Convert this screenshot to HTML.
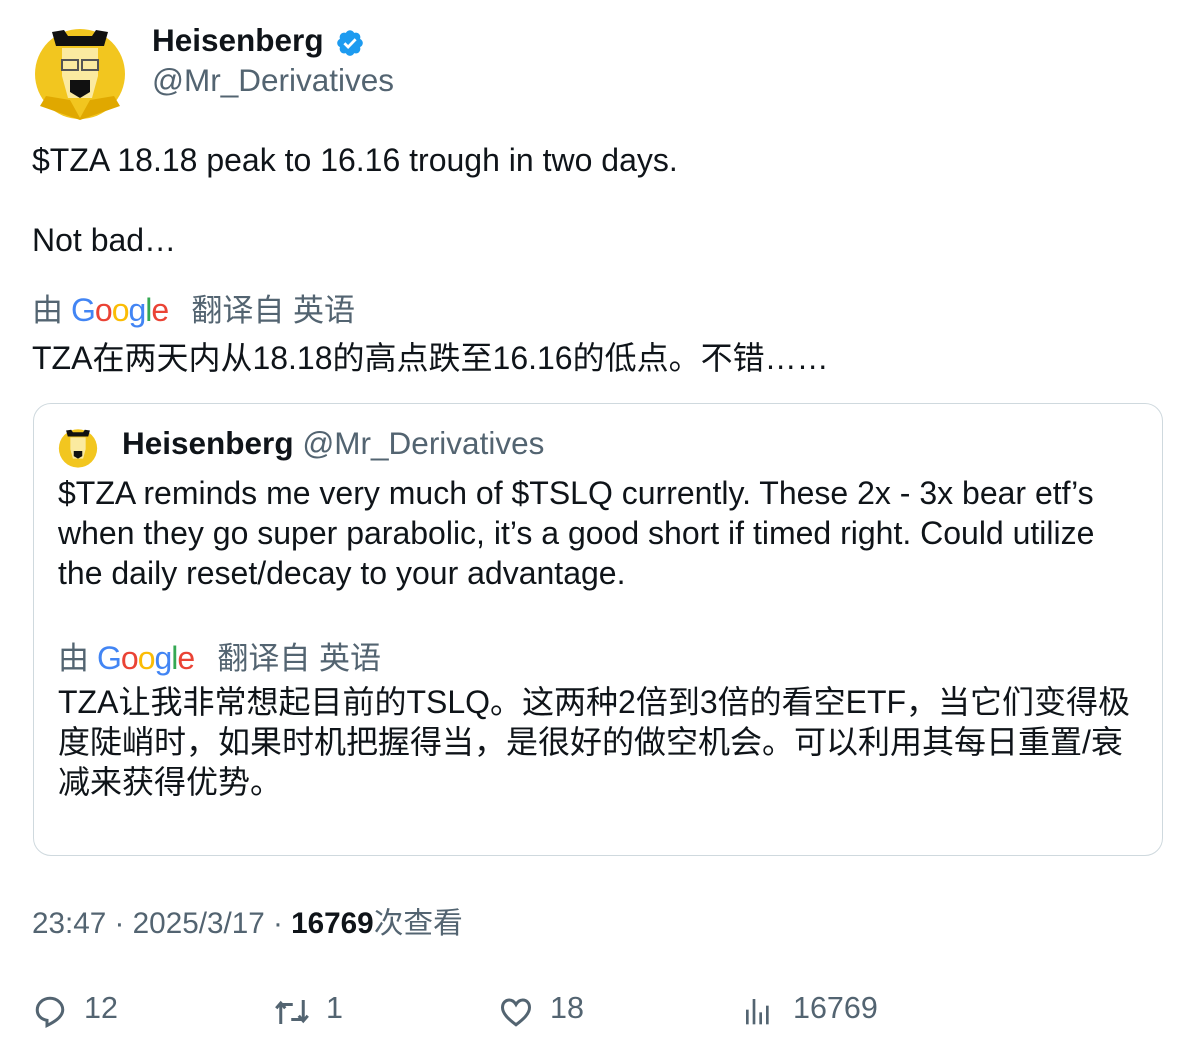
<!DOCTYPE html><html><head><meta charset="utf-8"><style>
body{margin:0;background:#fff;font-family:"Liberation Sans","Noto Sans CJK SC",sans-serif;color:#0f1419;width:1196px;height:1056px;overflow:hidden;position:relative}
.a{position:absolute;white-space:nowrap}
.g{font-weight:400;font-size:32px;letter-spacing:-1px;margin-left:8px;margin-right:6px}
.gr{color:#536471}
</style></head><body>
<svg class="a" style="left:34px;top:26px" width="92" height="94" viewBox="0 0 92 94">
<circle cx="46" cy="48" r="45" fill="#f2c61f"/>
<path d="M18 6 L30 4 L34 10 L58 10 L62 4 L74 6 L70 20 L22 20Z" fill="#111"/>
<path d="M28 22 L64 22 L64 50 L58 72 L34 72 L28 50Z" fill="#fbeaa0"/>
<rect x="28" y="34" width="16" height="10" fill="none" stroke="#555" stroke-width="2"/><rect x="48" y="34" width="16" height="10" fill="none" stroke="#555" stroke-width="2"/>
<path d="M36 54 L56 54 L56 66 L46 72 L36 66Z" fill="#111"/>
<path d="M12 70 L36 74 L46 92 L56 74 L80 70 L86 80 L46 94 L6 80Z" fill="#e0a800"/>
</svg>
<div class="a" style="left:152px;top:22px;font-size:31.5px;font-weight:bold">Heisenberg</div>
<svg class="a" style="left:335px;top:28px" width="30" height="30" viewBox="0 0 24 24"><path fill="#1d9bf0" d="M22.25 12c0-1.43-.88-2.67-2.19-3.34.46-1.39.2-2.9-.81-3.91s-2.52-1.27-3.91-.81c-.66-1.31-1.91-2.19-3.34-2.19s-2.670.88-3.33 2.19c-1.4-.46-2.91-.2-3.92.81s-1.26 2.52-.8 3.91c-1.31.67-2.2 1.91-2.2 3.34s.89 2.67 2.2 3.34c-.46 1.39-.21 2.9.8 3.91s2.52 1.26 3.91.81c.67 1.31 1.91 2.19 3.34 2.19s2.68-.88 3.34-2.19c1.39.45 2.9.2 3.91-.81s1.27-2.52.81-3.91c1.31-.67 2.19-1.91 2.19-3.34z"/><path d="M7.5 12.2l3 3 6-6.2" stroke="#fff" stroke-width="2.2" fill="none"/></svg>
<div class="a gr" style="left:152px;top:62px;font-size:31.5px">@Mr_Derivatives</div>
<div class="a" style="left:32px;top:142px;font-size:32px">$TZA 18.18 peak to 16.16 trough in two days.</div>
<div class="a" style="left:32px;top:222px;font-size:32px">Not bad…</div>
<div class="a gr" style="left:32px;top:285px;font-size:31px">由<span class="g"><span style="color:#4285f4">G</span><span style="color:#ea4335">o</span><span style="color:#fbbc05">o</span><span style="color:#4285f4">g</span><span style="color:#34a853">l</span><span style="color:#ea4335">e</span></span> &nbsp;翻译自 英语</div>
<div class="a" style="left:32px;top:333px;font-size:32px">TZA在两天内从18.18的高点跌至16.16的低点。不错……</div>
<div class="a" style="left:33px;top:403px;width:1128px;height:451px;border:1.5px solid #cfd9de;border-radius:18px"></div>
<svg class="a" style="left:58px;top:428px" width="40" height="40" viewBox="0 0 92 94"><circle cx="46" cy="48" r="45" fill="#f2c61f"/><path d="M18 6 L30 4 L34 10 L58 10 L62 4 L74 6 L70 20 L22 20Z" fill="#111"/><path d="M28 22 L64 22 L64 50 L58 72 L34 72 L28 50Z" fill="#fbeaa0"/><path d="M36 54 L56 54 L56 66 L46 72 L36 66Z" fill="#111"/></svg>
<div class="a" style="left:122px;top:425px;font-size:31.5px"><b>Heisenberg</b> <span class="gr">@Mr_Derivatives</span></div>
<div class="a" style="left:58px;top:473px;font-size:32px;line-height:40px">$TZA reminds me very much of $TSLQ currently. These 2x - 3x bear etf’s<br>when they go super parabolic, it’s a good short if timed right. Could utilize<br>the daily reset/decay to your advantage.</div>
<div class="a gr" style="left:58px;top:633px;font-size:31px">由<span class="g"><span style="color:#4285f4">G</span><span style="color:#ea4335">o</span><span style="color:#fbbc05">o</span><span style="color:#4285f4">g</span><span style="color:#34a853">l</span><span style="color:#ea4335">e</span></span> &nbsp;翻译自 英语</div>
<div class="a" style="left:58px;top:682px;font-size:32px;line-height:40px">TZA让我非常想起目前的TSLQ。这两种2倍到3倍的看空ETF，当它们变得极<br>度陡峭时，如果时机把握得当，是很好的做空机会。可以利用其每日重置/衰<br>减来获得优势。</div>
<div class="a gr" style="left:32px;top:899px;font-size:29.7px">23:47 · 2025/3/17 · <b style="color:#0f1419">16769</b>次查看</div>
<svg class="a" style="left:32px;top:993px" width="36" height="36" viewBox="0 0 24 24" fill="none" stroke="#536471" stroke-width="2"><path d="M12 3.5c-4.6 0-8.5 3.4-8.5 7.8 0 3.7 2.6 6.2 6.5 6.9v3.5c3.5-1.8 10.5-5.3 10.5-10.5 0-4.3-3.9-7.7-8.5-7.7z"/></svg>
<div class="a gr" style="left:84px;top:991px;font-size:30.5px">12</div>
<svg class="a" style="left:274px;top:994px" width="36" height="36" viewBox="0 0 24 24" fill="none" stroke="#536471" stroke-width="2"><path d="M4.5 20V7h8M1.5 9.5l3-3.5 3 3.5M19.5 4v13h-8M16.5 14.5l3 3.5 3-3.5"/></svg>
<div class="a gr" style="left:326px;top:991px;font-size:30.5px">1</div>
<svg class="a" style="left:498px;top:994px" width="36" height="36" viewBox="0 0 24 24" fill="none" stroke="#536471" stroke-width="2"><path d="M12 20.5c-4-3-9-7-9-11.5C3 6 5 4 7.5 4 9.5 4 11 5.3 12 7c1-1.7 2.5-3 4.5-3C19 4 21 6 21 9c0 4.5-5 8.5-9 11.5z"/></svg>
<div class="a gr" style="left:550px;top:991px;font-size:30.5px">18</div>
<svg class="a" style="left:742px;top:994px" width="32" height="34" viewBox="0 0 24 24" fill="#536471"><rect x="3" y="11" width="2" height="11"/><rect x="8" y="3" width="2" height="19"/><rect x="13" y="13" width="2" height="9"/><rect x="18" y="8" width="2" height="14"/></svg>
<div class="a gr" style="left:793px;top:991px;font-size:30.5px">16769</div>
</body></html>
